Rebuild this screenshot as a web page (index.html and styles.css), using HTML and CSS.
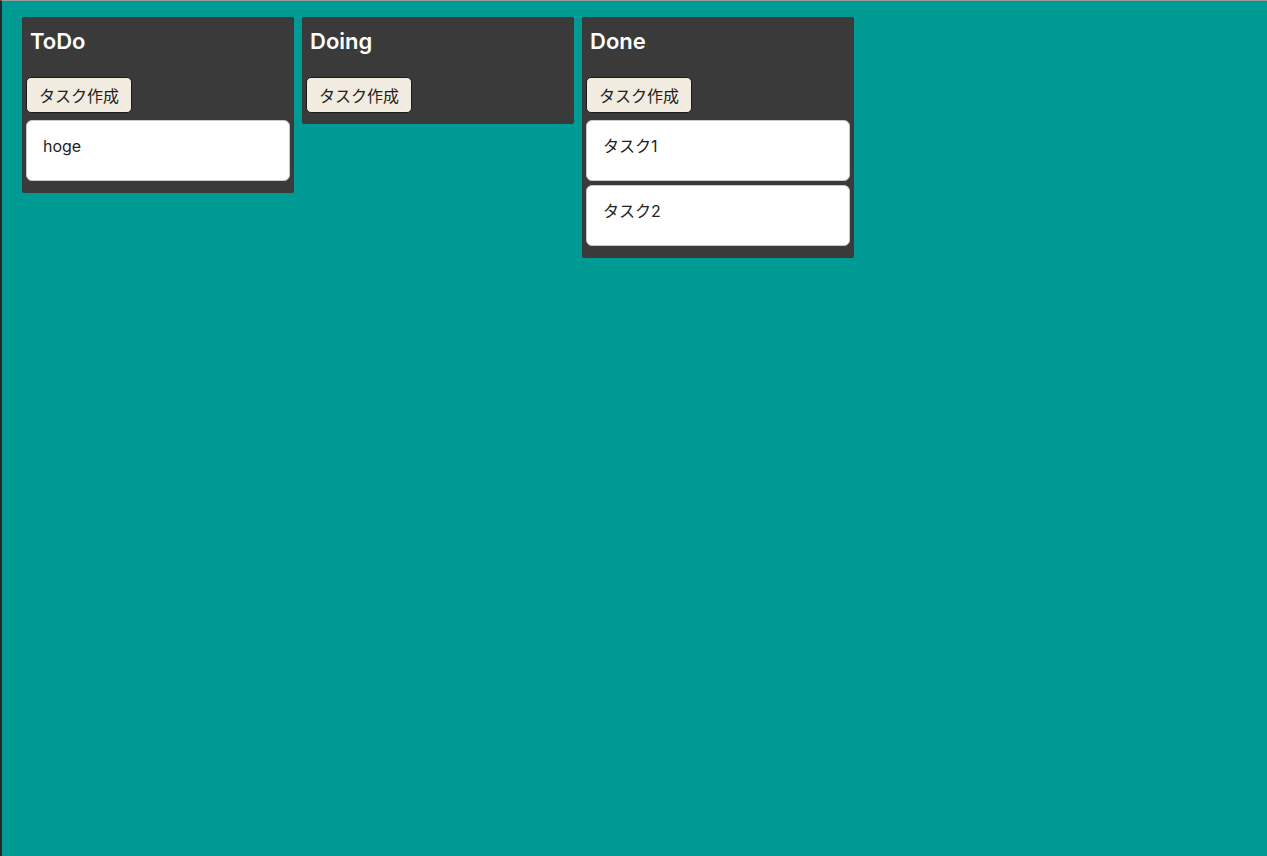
FILE: index.html
```html
<!DOCTYPE html>
<html>
<head>
    <meta charset="UTF-8">
    <title>Kanban</title>
    <link rel="stylesheet" href="styles.css">
</head>
<body>
    <div class="board">
        <!-- ToDo -->
        <div class="lane">
            <h2 class="lane-title">ToDo</h2>
            <button class="add-task-btn">タスク作成</button>
            <div class="task-list">
                <div class="task-card">hoge</div>
            </div>
        </div>

        <!-- Doing -->
        <div class="lane">
            <h2 class="lane-title">Doing</h2>
            <button class="add-task-btn">タスク作成</button>
            <div class="task-list"></div>
        </div>

        <!-- Done -->
        <div class="lane">
            <h2 class="lane-title">Done</h2>
            <button class="add-task-btn">タスク作成</button>
            <div class="task-list">
                <div class="task-card">タスク1</div>
                <div class="task-card">タスク2</div>
            </div>
        </div>
    </div>
</body>
</html>
```

FILE: styles.css
```css
html, body {
    height: 100%;
}

body {
    margin: 0;
    background-color: #009a95;
    border-top: 1px solid #9a9a9a;
    border-left: 2px solid #1f2a29;
    box-sizing: border-box;
    font-family: Inter, "Noto Sans CJK JP", sans-serif;
}

.board {
    display: flex;
    align-items: flex-start;
    gap: 8px;
    padding: 16px 20px;
}

.lane {
    width: 272px;
    box-sizing: border-box;
    padding: 4px 4px 8px 4px;
    background-color: #3a3a3a;
    border-radius: 2px;
}

.lane-title {
    margin: 7px 4px 22px 4px;
    color: #fff;
    font-size: 22px;
    font-weight: 600;
    line-height: 1.21;
}

.add-task-btn {
    display: block;
    height: 36px;
    padding: 0 12px;
    background-color: #f1ecdf;
    color: #222;
    border: 1px solid #1a1a1a;
    border-radius: 5px;
    font-family: inherit;
    font-size: 16px;
    cursor: pointer;
    margin-bottom: 3px;
}

.task-list {
    display: flex;
    flex-direction: column;
    gap: 4px;
}

.task-card {
    height: 61px;
    box-sizing: border-box;
    padding: 16px 16px;
    background-color: #fff;
    border: 1px solid #c8c8c8;
    border-radius: 6px;
    color: #222;
    font-size: 16px;
    line-height: 19px;
}

.task-card:first-child {
    margin-top: 4px;
}

.task-card:last-child {
    margin-bottom: 4px;
}
```
